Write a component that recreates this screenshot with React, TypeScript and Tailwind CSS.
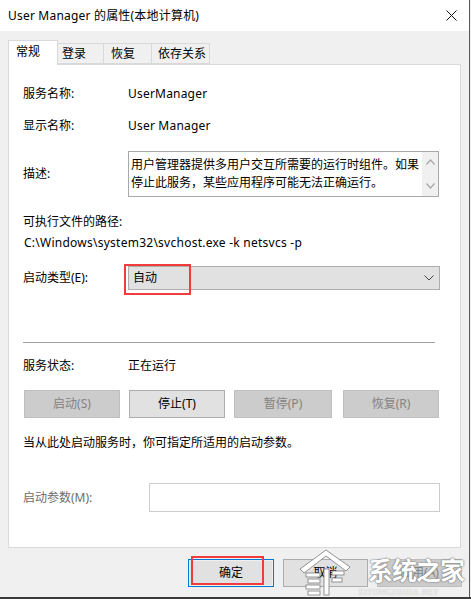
import React from "react";

const font = "font-['Noto_Sans','Noto_Sans_CJK_SC',sans-serif]";

function Chevron({ up }: { up?: boolean }) {
  return (
    <svg width="9" height="6" viewBox="0 0 9 6" fill="none">
      <path d={up ? "M0.5 5.5 L4.5 1 L8.5 5.5" : "M0.5 0.5 L4.5 5 L8.5 0.5"} stroke="#a6a6a6" strokeWidth="1.2" />
    </svg>
  );
}

export default function App() {
  return (
    <div className={`${font} relative w-[471px] h-[599px] overflow-hidden bg-[#f0f0f0] text-[12px] text-black leading-none`}>
      <div className="flex flex-col w-[470px] h-[597px] border-r border-[#5a5a5a]">
        {/* title bar */}
        <div className="h-[31px] bg-white flex items-center justify-between pl-[8px] pr-[12px]">
          <span className="text-[12px] text-black tracking-[0.2px]">User Manager 的属性(本地计算机)</span>
          <svg width="11" height="11" viewBox="0 0 11 11">
            <path d="M0.5 0.5 L10.5 10.5 M10.5 0.5 L0.5 10.5" stroke="#111" strokeWidth="1" />
          </svg>
        </div>

        {/* tabs */}
        <div className="flex items-end pl-[8px] pt-[9px] h-[33px]">
          <div className="relative z-10 -mb-px w-[50px] h-[25px] bg-white border border-b-0 border-[#d9d9d9] pl-[7px] pt-[5px]">常规</div>
          <div className="w-[46px] h-[21px] border border-l-0 border-[#d9d9d9] bg-[#f0f0f0] pl-[4px] pt-[4px]">登录</div>
          <div className="w-[48px] h-[21px] border border-l-0 border-[#d9d9d9] bg-[#f0f0f0] pl-[7px] pt-[4px]">恢复</div>
          <div className="w-[58px] h-[21px] border border-l-0 border-[#d9d9d9] bg-[#f0f0f0] pl-[6px] pt-[4px]">依存关系</div>
        </div>

        {/* panel */}
        <div className="ml-[8px] w-[453px] h-[484px] bg-white border border-[#d9d9d9] pl-[14px] flex flex-col">
          <div className="mt-[19px] h-[20px] flex items-center">
            <span className="w-[105px]">服务名称:</span>
            <span className="tracking-[0.2px]">UserManager</span>
          </div>
          <div className="mt-[12px] h-[20px] flex items-center">
            <span className="w-[105px]">显示名称:</span>
            <span className="tracking-[0.2px]">User Manager</span>
          </div>
          <div className="mt-[15px] h-[46px] flex items-center">
            <span className="w-[105px]">描述:</span>
            <div className="w-[311px] h-[46px] border border-[#a9a9a9] flex">
              <div className="flex-1 pl-[2px] pt-[4px] leading-[18px]">
                用户管理器提供多用户交互所需要的运行时组件。如果
                <br />
                停止此服务，某些应用程序可能无法正确运行。
              </div>
              <div className="w-[16px] h-full bg-[#f0f0f0] flex flex-col items-center justify-between py-[7px]">
                <Chevron up />
                <Chevron />
              </div>
            </div>
          </div>
          <div className="mt-[15px] h-[20px] flex items-center">可执行文件的路径:</div>
          <div className="mt-[1px] h-[20px] flex items-center pl-[1px] tracking-[0.25px]">C:\Windows\system32\svchost.exe -k netsvcs -p</div>
          <div className="mt-[13px] h-[24px] flex items-center">
            <span className="w-[105px]">启动类型(E):</span>
            <div className="relative w-[312px] h-[24px] bg-[#e1e1e1] border border-[#adadad] flex items-center justify-between pl-[4px] pr-[5px]">
              <span>自动</span>
              <svg width="10" height="6" viewBox="0 0 10 6" fill="none">
                <path d="M0.5 0.5 L5 5 L9.5 0.5" stroke="#444" strokeWidth="1" />
              </svg>
              <div className="absolute left-[-5px] top-[-3px] w-[67px] h-[31px] border-2 border-[#f23b3b]" />
            </div>
          </div>
          <div className="mt-[52px] w-[412px] h-px bg-[#a0a0a0]" />
          <div className="mt-[13px] h-[20px] flex items-center">
            <span className="w-[105px]">服务状态:</span>
            <span>正在运行</span>
          </div>
          <div className="mt-[14px] h-[28px] flex pl-[1px]">
            <div className="w-[96px] h-[28px] bg-[#cccccc] border border-[#bfbfbf] text-[#838383] flex items-center justify-center">启动(S)</div>
            <div className="ml-[9px] w-[96px] h-[28px] bg-[#e1e1e1] border border-[#adadad] flex items-center justify-center">停止(T)</div>
            <div className="ml-[9px] w-[98px] h-[28px] bg-[#cccccc] border border-[#bfbfbf] text-[#838383] flex items-center justify-center">暂停(P)</div>
            <div className="ml-[11px] w-[96px] h-[28px] bg-[#cccccc] border border-[#bfbfbf] text-[#838383] flex items-center justify-center">恢复(R)</div>
          </div>
          <div className="mt-[15px] h-[20px] flex items-center">当从此处启动服务时，你可指定所适用的启动参数。</div>
          <div className="mt-[30px] h-[29px] flex items-center">
            <span className="w-[126px] text-[#6d6d6d]">启动参数(M):</span>
            <div className="w-[291px] h-[29px] border border-[#cccccc] bg-white" />
          </div>
        </div>

        {/* bottom buttons */}
        <div className="flex pt-[11px] pl-[188px]">
          <div className="relative w-[86px] h-[28px] border border-[#0078d7] p-px">
            <div className="w-full h-full bg-[#e1e1e1] flex items-center justify-center">确定</div>
            <div className="absolute left-[2px] top-[-4px] w-[73px] h-[29px] border-2 border-[#f23b3b]" />
          </div>
          <div className="ml-[9px] w-[85px] h-[28px] bg-[#e1e1e1] border border-[#adadad] flex items-center justify-center">取消</div>
          <div className="ml-[9px] w-[85px] h-[28px] bg-[#cccccc] border border-[#bfbfbf] text-[#838383] flex items-center justify-center">应用(A)</div>
        </div>
      </div>
      <div className="absolute left-0 bottom-0 w-[471px] h-[2px] bg-[#3a3a3a]" />

      {/* watermark */}
      <div className="absolute left-[296px] top-[547px] w-[175px] h-[52px] pointer-events-none">
        <svg className="absolute left-0 top-0" width="56" height="50" viewBox="0 0 56 50">
          <g fill="#ffffff" stroke="#7a7a7a" strokeWidth="0.8">
            <path d="M4 22 L30 3 L54 20 L50 24 L30 9 L8 26 Z" />
            <rect x="10" y="26" width="14" height="4" />
            <rect x="12" y="32" width="12" height="4" />
            <rect x="10" y="38" width="14" height="4" />
            <rect x="12" y="44" width="12" height="4" />
            <rect x="28" y="22" width="5" height="26" />
            <rect x="36" y="24" width="12" height="4" />
            <rect x="36" y="31" width="10" height="4" />
          </g>
        </svg>
        <div className="absolute left-[72px] top-[11px] text-[25px] leading-none font-bold text-white [text-shadow:0_0_2px_#777,0_0_1px_#555] tracking-[-1px]">系统之家</div>
        <div className="absolute left-[62px] top-[42px] text-[8px] leading-none text-white font-['Liberation_Serif',serif] [text-shadow:0_0_1px_#888] tracking-[0.5px]">XITONGZHIJIA.NET</div>
      </div>
    </div>
  );
}
